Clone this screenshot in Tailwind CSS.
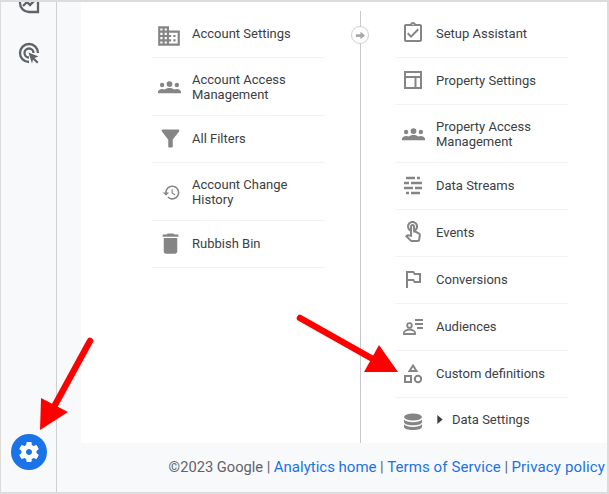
<!DOCTYPE html>
<html lang="en">

<head>
  <meta charset="UTF-8" />
  <title>Admin - Analytics</title>
  <script src="https://cdn.jsdelivr.net/npm/@tailwindcss/browser@4"></script>
</head>

<body class="bg-[#f8f9fa]">
  <div class="relative w-[609px] h-[494px] overflow-hidden flex flex-col border-t-2 border-l border-r-2 border-b-2 border-[#dcdcdc] font-['Roboto',sans-serif] text-[13px] leading-[15px] text-[#3c4043]">
    <div class="flex flex-1 min-h-0">
      <!-- sidebar -->
      <aside class="w-[56px] shrink-0 border-r border-[#cfd0d1] flex flex-col items-center relative">
        <svg class="absolute left-[16px] top-[-11px] w-6 h-6" viewBox="0 0 24 24" fill="none" stroke="#5f6368" stroke-width="2.300"><path d="M21 21h-9a9 9 0 1 1 9-9z"/><path d="M6 15l4-4 3 3 5-5"/></svg>
        <svg class="absolute left-[16px] top-[39px] w-6 h-6" viewBox="0 0 24 24" fill="none" stroke="#5f6368" stroke-width="2.300"><path d="M12 21a9 9 0 1 1 9-9"/><path d="M12 16.500a4.500 4.500 0 1 1 4.500-4.500"/><path d="M11.500 11.500l10 4-4 1.500 4 4-1.500 1.500-4-4-1 4z" fill="#5f6368" stroke="none"/></svg>
        <div class="mt-auto mb-[22px] w-9 h-9 rounded-full bg-[#1a73e8] flex items-center justify-center">
          <svg class="w-6 h-6" viewBox="0 0 24 24" fill="#fff"><path d="M19.430 12.980c.04-.32.07-.64.07-.98s-.03-.66-.07-.98l2.110-1.650c.19-.15.24-.42.12-.64l-2-3.460c-.12-.22-.39-.3-.61-.22l-2.490 1c-.52-.4-1.080-.73-1.690-.98l-.38-2.650C14.460 2.180 14.250 2 14 2h-4c-.25 0-.46.18-.49.42l-.38 2.650c-.61.25-1.170.59-1.690.98l-2.490-1c-.23-.09-.49 0-.61.22l-2 3.460c-.13.22-.07.49.12.64l2.110 1.650c-.04.32-.07.65-.07.98s.03.66.07.98l-2.110 1.650c-.19.15-.24.42-.12.64l2 3.460c.12.22.39.3.61.22l2.490-1c.52.4 1.080.73 1.690.98l.38 2.650c.03.24.24.42.49.42h4c.25 0 .46-.18.49-.42l.38-2.650c.61-.25 1.170-.59 1.690-.98l2.490 1c.23.09.49 0 .61-.22l2-3.460c.12-.22.07-.49-.12-.64l-2.110-1.650zM12 15c-1.660 0-3-1.340-3-3s1.340-3 3-3 3 1.340 3 3-1.340 3-3 3z"/></svg>
        </div>
      </aside>

      <div class="flex-1 flex flex-col min-w-0">
        <!-- white panel -->
        <main class="ml-[24px] flex-1 bg-white flex">
          <section class="ml-[71px] mt-[9px] w-[173px] shrink-0">
            <div class="h-[47px] pb-[2px] border-b border-[#f1f3f4] flex items-center gap-[4px]">
              <div class="w-9 shrink-0 flex justify-center"><svg class="w-[26px] h-[26px] shrink-0 -translate-x-px translate-y-[3px]" viewBox="0 0 24 24" fill="#858585"><path d="M12 7V3H2v18h20V7H12zM6 19H4v-2h2v2zm0-4H4v-2h2v2zm0-4H4V9h2v2zm0-4H4V5h2v2zm4 12H8v-2h2v2zm0-4H8v-2h2v2zm0-4H8V9h2v2zm0-4H8V5h2v2zm10 12h-8v-2h2v-2h-2v-2h2v-2h-2V9h8v10zm-2-8h-2v2h2v-2zm0 4h-2v2h2v-2z"/></svg></div>
              <span>Account Settings</span>
            </div>
            <div class="h-[58px] border-b border-[#f1f3f4] flex items-center gap-[4px]">
              <div class="w-9 shrink-0 flex justify-center"><svg class="w-[23px] h-[23px] shrink-0 -translate-x-px" viewBox="0 0 24 24" fill="#858585"><circle cx="4.300" cy="10.500" r="2.300"/><circle cx="12" cy="9.500" r="3"/><circle cx="19.700" cy="10.500" r="2.300"/><path d="M0 19v-1.500c0-1.300 1.800-3 4.500-3 .9 0 1.700.2 2.300.5 1.300-.8 3.200-1.500 5.200-1.500s3.900.7 5.200 1.500c.6-.3 1.400-.5 2.300-.5 2.700 0 4.500 1.700 4.500 3V19z"/></svg></div>
              <span class="w-[110px]">Account Access Management</span>
            </div>
            <div class="h-[47px] pb-[2px] border-b border-[#f1f3f4] flex items-center gap-[4px]">
              <div class="w-9 shrink-0 flex justify-center"><svg class="w-[27px] h-[27px] shrink-0" viewBox="0 0 24 24" fill="#858585"><path d="M4.250 5.610C6.270 8.200 10 13 10 13v6c0 .55.45 1 1 1h2c.55 0 1-.45 1-1v-6s3.720-4.800 5.740-7.390c.51-.66.04-1.610-.79-1.610H5.040c-.83 0-1.300.95-.79 1.610z"/></svg></div>
              <span>All Filters</span>
            </div>
            <div class="h-[58px] border-b border-[#f1f3f4] flex items-center gap-[4px]">
              <div class="w-9 shrink-0 flex justify-center"><svg class="w-[19px] h-[19px] shrink-0 translate-x-[1px] translate-y-[1px]" viewBox="0 0 24 24" fill="#858585"><path d="M13 3c-4.970 0-9 4.030-9 9H1l3.890 3.890.07.14L9 12H6c0-3.870 3.130-7 7-7s7 3.130 7 7-3.130 7-7 7c-1.930 0-3.680-.79-4.940-2.060l-1.420 1.420C8.270 19.990 10.510 21 13 21c4.970 0 9-4.030 9-9s-4.030-9-9-9zm-1 5v5l4.280 2.540.72-1.210-3.500-2.080V8H12z"/></svg></div>
              <span class="w-[110px]">Account Change History</span>
            </div>
            <div class="h-[47px] pb-[2px] border-b border-[#f1f3f4] flex items-center gap-[4px]">
              <div class="w-9 shrink-0 flex justify-center"><svg class="w-[27px] h-[27px] shrink-0" viewBox="0 0 24 24" fill="#858585"><path d="M6 19c0 1.100.9 2 2 2h8c1.100 0 2-.9 2-2V7H6v12zM19 4h-3.500l-1-1h-5l-1 1H5v2h14V4z"/></svg></div>
              <span>Rubbish Bin</span>
            </div>
          </section>

          <!-- divider with arrow -->
          <div class="relative ml-[35px] mt-[9px] w-px bg-[#c8c9ca] shrink-0">
            <div class="absolute top-[15px] left-[-9px] w-[18px] h-[18px] rounded-full bg-white border border-[#cfd0d1] flex items-center justify-center">
              <svg class="w-[11px] h-[11px]" viewBox="0 0 24 24" fill="#a8a8a8"><path d="M12 4v5H2v6h10v5l10-8z"/></svg>
            </div>
          </div>

          <section class="ml-[34px] mt-[9px] w-[173px] shrink-0">
            <div class="h-[47px] pb-[2px] border-b border-[#f1f3f4] flex items-center gap-[5px]">
              <div class="w-9 shrink-0 flex justify-center"><svg class="w-6 h-6 shrink-0" viewBox="0 0 24 24" fill="#858585"><path d="M18 9l-1.410-1.420L10 14.170l-2.590-2.580L6 13l4 4zm1-6h-4.180C14.400 1.840 13.300 1 12 1c-1.300 0-2.400.84-2.820 2H5c-.14 0-.27.01-.4.04-.39.08-.74.28-1.010.55-.18.18-.33.4-.43.64-.1.23-.16.49-.16.77v14c0 .27.06.54.16.78s.25.45.43.64c.27.27.62.47 1.010.55.13.02.26.03.4.03h14c1.100 0 2-.9 2-2V5c0-1.100-.9-2-2-2zm-7-.25c.41 0 .75.34.75.75s-.34.75-.75.75-.75-.34-.75-.75.34-.75.75-.75zM19 19H5V5h14v14z"/></svg></div>
              <span>Setup Assistant</span>
            </div>
            <div class="h-[47px] pb-[2px] border-b border-[#f1f3f4] flex items-center gap-[5px]">
              <div class="w-9 shrink-0 flex justify-center"><svg class="w-6 h-6 shrink-0" viewBox="0 0 24 24" fill="none" stroke="#858585" stroke-width="2"><path d="M4 4h16v16H4zM4 9h16M14.500 9v11"/></svg></div>
              <span>Property Settings</span>
            </div>
            <div class="h-[58px] border-b border-[#f1f3f4] flex items-center gap-[5px]">
              <div class="w-9 shrink-0 flex justify-center"><svg class="w-[23px] h-[23px] shrink-0" viewBox="0 0 24 24" fill="#858585"><circle cx="4.300" cy="10.500" r="2.300"/><circle cx="12" cy="9.500" r="3"/><circle cx="19.700" cy="10.500" r="2.300"/><path d="M0 19v-1.500c0-1.300 1.800-3 4.500-3 .9 0 1.700.2 2.300.5 1.300-.8 3.200-1.500 5.200-1.500s3.900.7 5.200 1.500c.6-.3 1.400-.5 2.300-.5 2.700 0 4.500 1.700 4.500 3V19z"/></svg></div>
              <span class="w-[110px]">Property Access Management</span>
            </div>
            <div class="h-[47px] pb-[2px] border-b border-[#f1f3f4] flex items-center gap-[5px]">
              <div class="w-9 shrink-0 flex justify-center"><svg class="w-6 h-6 shrink-0" viewBox="0 0 24 24" fill="none" stroke="#858585" stroke-width="2.400"><path d="M5 5h9M16 5h3M3 10h5M10 10h11M3 15h9M14 15h7M5 20h3M10 20h9"/></svg></div>
              <span>Data Streams</span>
            </div>
            <div class="h-[47px] pb-[2px] border-b border-[#f1f3f4] flex items-center gap-[5px]">
              <div class="w-9 shrink-0 flex justify-center"><svg class="w-6 h-6 shrink-0" viewBox="0 0 24 24" fill="#858585"><path d="M18.190 12.440l-3.240-1.620c1.290-1 2.120-2.560 2.120-4.320 0-3.030-2.470-5.500-5.500-5.500s-5.500 2.470-5.500 5.500c0 2.130 1.220 3.980 3 4.890v3.260c-2.150-.46-2.020-.44-2.260-.44-.53 0-1.030.21-1.410.59L4 16.220l5.090 5.090C9.520 21.750 10.120 22 10.740 22h6.300c.98 0 1.810-.7 1.970-1.670l.8-4.710c.22-1.300-.43-2.580-1.620-3.180zm-.35 2.850l-.8 4.710h-6.300c-.09 0-.17-.04-.24-.1l-3.680-3.680 4.250.89V6.500c0-.28.22-.5.5-.5s.5.22.5.5v6h1.760l3.460 1.730c.4.2.62.63.55 1.060zM8.070 6.500c0-1.930 1.570-3.500 3.500-3.500s3.500 1.570 3.500 3.500c0 .95-.38 1.810-1 2.440V6.500c0-1.380-1.120-2.500-2.500-2.500s-2.500 1.120-2.500 2.500v2.440c-.62-.63-1-1.490-1-2.440z"/></svg></div>
              <span>Events</span>
            </div>
            <div class="h-[47px] pb-[2px] border-b border-[#f1f3f4] flex items-center gap-[5px]">
              <div class="w-9 shrink-0 flex justify-center"><svg class="w-6 h-6 shrink-0" viewBox="0 0 24 24" fill="#858585"><path d="M14 6l-1-2H5v17h2v-7h5l1 2h7V6h-6zm4 8h-4l-1-2H7V6h5l1 2h5v6z"/></svg></div>
              <span>Conversions</span>
            </div>
            <div class="h-[47px] pb-[2px] border-b border-[#f1f3f4] flex items-center gap-[5px]">
              <div class="w-9 shrink-0 flex justify-center"><svg class="w-6 h-6 shrink-0" viewBox="0 0 24 24" fill="none" stroke="#858585" stroke-width="1.800"><circle cx="8.500" cy="11.500" r="2.300"/><path d="M3 20v-1.500c0-1.500 3-3 5.500-3s5.500 1.500 5.500 3V20z"/><path d="M14 6h8M14 10h8M16 14h6"/></svg></div>
              <span>Audiences</span>
            </div>
            <div class="h-[47px] pb-[2px] border-b border-[#f1f3f4] flex items-center gap-[5px]">
              <div class="w-9 shrink-0 flex justify-center"><svg class="w-6 h-6 shrink-0" viewBox="0 0 24 24" fill="none" stroke="#858585" stroke-width="2"><path d="M12 4.500l3.500 5.500h-7z"/><path d="M4 15h6v6H4z"/><circle cx="17" cy="18" r="3.200"/></svg></div>
              <span>Custom definitions</span>
            </div>
            <div class="h-[45px] pb-[2px] flex items-center">
              <div class="w-9 shrink-0 flex justify-center"><svg class="w-6 h-6 shrink-0 translate-y-[1px]" viewBox="0 0 24 24" fill="#858585"><ellipse cx="12" cy="8" rx="9" ry="3.500"/><path d="M3 10.500v2.500c0 2 4 3.300 9 3.300s9-1.300 9-3.300v-2.500c-1.500 1.800-5 2.700-9 2.700s-7.500-.9-9-2.700z"/><path d="M3 15.200v2.500c0 2 4 3.300 9 3.300s9-1.300 9-3.300v-2.500c-1.500 1.800-5 2.700-9 2.700s-7.500-.9-9-2.700z"/></svg></div>
              <svg class="ml-[6px] w-[6px] h-[9px] shrink-0" viewBox="0 0 6 10" fill="#3c4043"><path d="M0 0l6 5-6 5z"/></svg>
              <span class="ml-[9px]">Data Settings</span>
            </div>
          </section>
        </main>

        <!-- footer -->
        <footer class="h-[49px] flex items-center justify-end pr-[2px] text-[14.700px] text-[#5f6368] whitespace-nowrap">
          <span>©2023 Google</span>
          <span class="mx-[3.500px]">|</span>
          <a class="text-[15px] text-[#1a73e8]">Analytics home</a>
          <span class="mx-[3.500px]">|</span>
          <a class="text-[15px] tracking-[0.100px] text-[#1a73e8]">Terms of Service</a>
          <span class="mx-[3.500px]">|</span>
          <a class="text-[15px] tracking-[0.150px] text-[#1a73e8]">Privacy policy</a>
        </footer>
      </div>
    </div>

    <!-- red annotation arrows -->
    <svg class="absolute left-[-1px] top-[-2px] w-[609px] h-[494px] pointer-events-none" viewBox="0 0 609 494" fill="none">
      <path d="M90 341L55 405" stroke="#f00" stroke-width="6.500" stroke-linecap="round"/>
      <path d="M40 430L41 398L68 412z" fill="#f00"/>
      <path d="M300 318L371 358" stroke="#f00" stroke-width="6.500" stroke-linecap="round"/>
      <path d="M398 372L364 372L379 345z" fill="#f00"/>
    </svg>
  </div>
</body>

</html>
